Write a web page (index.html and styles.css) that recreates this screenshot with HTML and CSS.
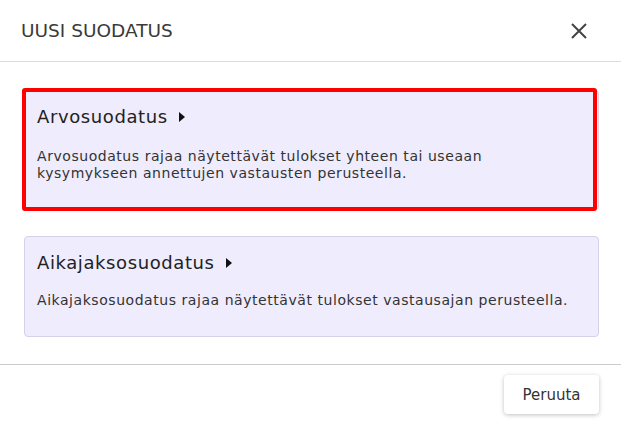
FILE: index.html
```html
<!DOCTYPE html>
<html lang="fi">
<head>
  <meta charset="UTF-8">
  <title>Uusi suodatus</title>
  <link rel="stylesheet" href="styles.css">
</head>
<body>
  <div class="dialog">
    <header class="dialog-header">
      <h2 class="dialog-title">UUSI SUODATUS</h2>
      <button class="close-btn" aria-label="Sulje">
        <svg width="16" height="16" viewBox="0 0 16 16"><path d="M1 1L15 15M15 1L1 15" stroke="#444" stroke-width="2" fill="none"/></svg>
      </button>
    </header>
    <div class="dialog-body">
      <div class="filter-card selected">
        <div class="filter-title">Arvosuodatus <span class="caret"></span></div>
        <p class="filter-desc">Arvosuodatus rajaa näytettävät tulokset yhteen tai useaan<br>kysymykseen annettujen vastausten perusteella.</p>
      </div>
      <div class="filter-card">
        <div class="filter-title">Aikajaksosuodatus <span class="caret"></span></div>
        <p class="filter-desc">Aikajaksosuodatus rajaa näytettävät tulokset vastausajan perusteella.</p>
      </div>
    </div>
    <footer class="dialog-footer">
      <button class="cancel-btn">Peruuta</button>
    </footer>
  </div>
</body>
</html>
```

FILE: styles.css
```css
html, body { margin: 0; padding: 0; background: #fff; font-family: "DejaVu Sans", sans-serif; color: #222; }
.dialog { width: 621px; height: 424px; box-sizing: border-box; }
.dialog-header { display: flex; align-items: center; justify-content: space-between; height: 62px; padding: 0 33px 0 21px; border-bottom: 1px solid #ddd; box-sizing: border-box; }
.dialog-title { margin: 0; font-size: 18.5px; font-weight: normal; color: #3a3a3a; }
.close-btn { border: none; background: none; padding: 0; width: 18px; height: 18px; display: flex; align-items: center; justify-content: center; cursor: pointer; }
.dialog-body { padding: 28px 22px 27px 24px; display: flex; flex-direction: column; gap: 26px; border-bottom: 1px solid #ccc; }
.filter-card { position: relative; background: #efecfd; border: 1px solid #d5d1e8; border-radius: 4px; padding: 15px 12px 27px 12px; }
.filter-card.selected::after { content: ""; position: absolute; left: -3px; top: -3px; right: 1px; bottom: -2px; border: 4px solid #f00; border-radius: 3px; }
.filter-card.selected .filter-desc { margin-top: 20px; }
.filter-title { font-size: 18px; line-height: 22px; letter-spacing: 0.6px; display: flex; align-items: center; gap: 11px; }
.caret { width: 0; height: 0; border-top: 5px solid transparent; border-bottom: 5px solid transparent; border-left: 6px solid #111; }
.filter-desc { margin: 18px 0 0 0; font-size: 14px; line-height: 17px; letter-spacing: 0.55px; color: #333; }
.dialog-footer { display: flex; justify-content: flex-end; padding: 10px 22px; }
.cancel-btn { font-family: inherit; font-size: 15px; color: #333; background: #fff; border: none; border-radius: 4px; padding: 0; height: 39px; width: 95px; box-shadow: 0 1px 4px rgba(0,0,0,0.25); cursor: pointer; }
```
